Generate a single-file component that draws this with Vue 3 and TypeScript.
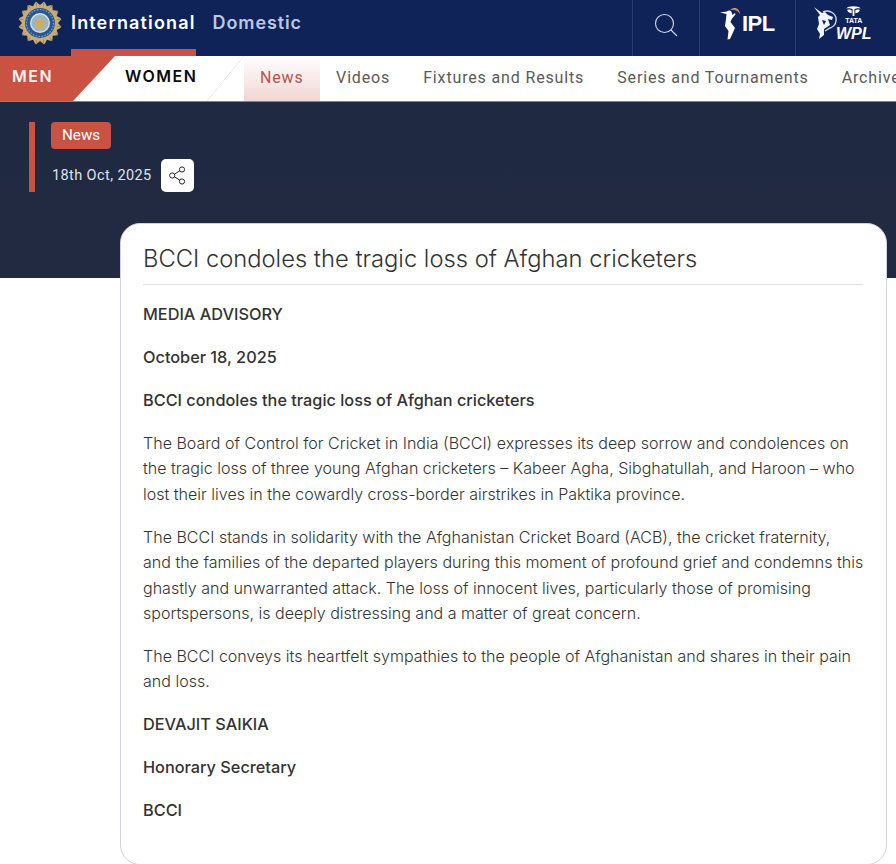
<script setup lang="ts">
const tabs = ['Videos', 'Fixtures and Results', 'Series and Tournaments', 'Archive']
const paragraphs = [
  { bold: true, text: 'MEDIA ADVISORY' },
  { bold: true, text: 'October 18, 2025' },
  { bold: true, text: 'BCCI condoles the tragic loss of Afghan cricketers' },
  { bold: false, text: 'The Board of Control for Cricket in India (BCCI) expresses its deep sorrow and condolences on the tragic loss of three young Afghan cricketers – Kabeer Agha, Sibghatullah, and Haroon – who lost their lives in the cowardly cross-border airstrikes in Paktika province.' },
  { bold: false, text: 'The BCCI stands in solidarity with the Afghanistan Cricket Board (ACB), the cricket fraternity,\nand the families of the departed players during this moment of profound grief and condemns this ghastly and unwarranted attack. The loss of innocent lives, particularly those of promising sportspersons, is deeply distressing and a matter of great concern.' },
  { bold: false, text: 'The BCCI conveys its heartfelt sympathies to the people of Afghanistan and shares in their pain and loss.' },
  { bold: true, text: 'DEVAJIT SAIKIA' },
  { bold: true, text: 'Honorary Secretary' },
  { bold: true, text: 'BCCI' },
]
const rays = Array.from({ length: 16 }, (_, i) => i * 22.5)
</script>

<template>
  <div class="page">
    <header class="top">
      <svg class="crest" viewBox="0 0 44 44" aria-hidden="true">
        <g fill="#c9ad72">
          <path v-for="r in rays" :key="r" d="M18 0.5 L22 4 L26 0.5 L25 9 L19 9 Z" :transform="`rotate(${r} 22 22)`" />
        </g>
        <circle cx="22" cy="22" r="15" fill="#2f5590" />
        <circle cx="22" cy="22" r="13.5" fill="none" stroke="#7fa2c8" stroke-width="1.2" stroke-dasharray="1.5 1.5" />
        <circle cx="22" cy="22" r="10" fill="#d8e2dc" />
        <circle cx="22" cy="22" r="8.6" fill="#8db8d8" />
        <path d="M22 14.5 L24.2 19.6 L29.6 20 L25.5 23.6 L26.8 29 L22 26.2 L17.2 29 L18.5 23.6 L14.4 20 L19.8 19.6 Z" fill="#d9a95a" />
      </svg>
      <nav class="primary">
        <a class="primary-link active">International</a>
        <a class="primary-link muted">Domestic</a>
      </nav>
      <div class="top-actions">
        <div class="action search">
          <svg width="24" height="24" viewBox="0 0 24 24" fill="none" stroke="#d6dcec" stroke-width="1.1" aria-hidden="true">
            <circle cx="10.5" cy="10.5" r="9" />
            <path d="M17 17 L23 23" />
          </svg>
        </div>
        <div class="action ipl">
          <svg width="22" height="33" viewBox="0 0 22 33" aria-hidden="true">
            <path d="M10 3 C14 -1 20 1 20 8 C20 5 16 2 10 3 Z" fill="#e6b23c" />
            <path d="M13 2.2 C16 1 19 3 20 7 C18 4 16 3 13 2.2 Z" fill="#c8679a" />
            <path d="M0 5.5 L7 4.5 C8 3 11 3 11.5 5 L12.5 8 L15 6 L15.5 7.5 L12 11.5 L10.5 15 L15 21 L10 32 L7.5 32.5 L8.5 24 L5 19 L6 12 L6.5 7 Z" fill="#fff" />
          </svg>
          <span class="ipl-text">IPL</span>
        </div>
        <div class="action wpl">
          <svg class="wpl-figure" width="23" height="32" viewBox="0 0 23 32" aria-hidden="true">
            <path d="M9 5 C16 2 23 7 22 14 C21.5 18 19 20 16 21 L11 24" fill="none" stroke="#cfd7ea" stroke-width="1.4" />
            <path d="M0 0 L8 6 L11 5 L14 8 L19 10 L18 13 L14 12 L16 18 L10 22 L10 28 L5 32 L6 27 L3 22 L5 17 L4 10 L6 8 Z" fill="#f1f4fa" />
            <path d="M8 13 L12 14 L10 18 Z" fill="#0f2359" />
          </svg>
          <div class="wpl-text">
            <svg class="tata-mark" width="15" height="10" viewBox="0 0 16 11" aria-hidden="true">
              <path d="M0 3 C2 -0.5 14 -0.5 16 3 C13 2 11 3 9 3.5 L9 11 L7 11 L7 3.5 C5 3 3 2 0 3 Z M1 4.5 C3 3.5 5 4 6 5 L6 8 C4 8 2 7 1 4.5 Z M15 4.5 C13 3.5 11 4 10 5 L10 8 C12 8 14 7 15 4.5 Z" fill="#fff" />
            </svg>
            <span class="tata">TATA</span>
            <span class="wpl-name">WPL</span>
          </div>
        </div>
      </div>
    </header>

    <div class="subnav">
      <div class="gender">
        <span class="men">MEN</span>
        <span class="women">WOMEN</span>
      </div>
      <div class="tabs">
        <a class="tab current">News</a>
        <a v-for="t in tabs" :key="t" class="tab">{{ t }}</a>
      </div>
    </div>

    <section class="hero">
      <div class="meta">
        <span class="badge">News</span>
        <div class="date-row">
          <span class="date">18th Oct, 2025</span>
          <button class="share" type="button" aria-label="Share">
            <svg width="17" height="19" viewBox="0 0 17 19" fill="none" stroke="#222" stroke-width="1" aria-hidden="true">
              <circle cx="13" cy="3.5" r="2.6" fill="#fff" />
              <circle cx="3.2" cy="9.5" r="2.6" fill="#fff" />
              <circle cx="13" cy="15.5" r="2.6" fill="#fff" />
              <path d="M5.5 8.2 L10.8 4.8 M5.5 10.8 L10.8 14.2" />
            </svg>
          </button>
        </div>
      </div>
    </section>

    <div class="article-wrap">
      <article class="card">
        <h1 class="title">BCCI condoles the tragic loss of Afghan cricketers</h1>
        <p v-for="(p, i) in paragraphs" :key="i" :class="['para', { strong: p.bold }]">{{ p.text }}</p>
      </article>
    </div>
  </div>
</template>

<style>
html, body { margin: 0; background: #fff; overflow: hidden; }
</style>

<style scoped>
.page {
  width: 896px;
  height: 864px;
  overflow: hidden;
  font-family: Roboto, "Liberation Sans", sans-serif;
  color: #333;
}
.top {
  height: 56px;
  background: #0f2359;
  display: flex;
  align-items: flex-start;
  padding-left: 18px;
  box-sizing: border-box;
}
.crest { width: 44px; height: 44px; margin-top: 1px; flex: none; }
.primary { display: flex; height: 56px; margin-left: 9px; gap: 17px; }
.primary-link {
  font-family: Inter, sans-serif;
  font-size: 18px;
  font-weight: 600;
  letter-spacing: 1.15px;
  line-height: 46px;
  height: 56px;
  box-sizing: border-box;
  color: #fff;
}
.primary-link.active { border-bottom: 7px solid #c95243; }
.primary-link.muted { color: #bcc7e4; letter-spacing: 0.9px; }
.top-actions { margin-left: auto; display: flex; height: 56px; }
.action {
  height: 56px;
  box-sizing: border-box;
  border-left: 1px solid #2a3c70;
  display: flex;
  align-items: center;
}
.search { width: 67px; padding-bottom: 6px; justify-content: center; }
.ipl { width: 96px; padding: 0 0 9px 20px; gap: 0; }
.ipl-text {
  font-family: "Liberation Sans", sans-serif;
  font-weight: 700;
  font-size: 22px;
  letter-spacing: -0.5px;
  color: #fff;
}
.wpl { width: 101px; padding: 0 0 7px 18px; gap: 0; }
.wpl-figure { margin-bottom: 3px; }
.wpl-text { display: flex; flex-direction: column; align-items: center; margin-left: -1px; }
.tata-mark { display: block; }
.tata {
  font-family: "Liberation Sans", sans-serif;
  font-weight: 700;
  font-size: 7px;
  line-height: 8px;
  color: #fff;
  margin-top: 1px;
}
.wpl-name {
  font-family: "Liberation Sans", sans-serif;
  font-style: italic;
  font-weight: 700;
  font-size: 16px;
  line-height: 18.4px;
  color: #fff;
}
.subnav {
  height: 46px;
  background: #fff;
  display: flex;
  box-sizing: border-box;
  border-bottom: 1px solid #7d8590;
  white-space: nowrap;
}
.gender { position: relative; width: 244px; flex: none; }
.men, .women {
  font-family: Inter, sans-serif;
  font-size: 16px;
  font-weight: 600;
  letter-spacing: 1.5px;
  position: absolute;
  top: 10px;
  line-height: 20px;
}
.gender {
  background:
    linear-gradient(to bottom right, transparent calc(50% - 0.5px), #dfe2e6 50%, transparent calc(50% + 0.5px)) 207px 0 / 37px 100% no-repeat,
    linear-gradient(to bottom right, #c95243 calc(50% - 0.5px), #fff calc(50% + 0.5px)) 73px 0 / 42px 100% no-repeat,
    linear-gradient(#c95243, #c95243) 0 0 / 73px 100% no-repeat;
}
.men { left: 12px; color: #fdf2f0; }
.women { left: 125px; color: #0a0a0a; }
.tabs { display: flex; flex: none; }
.tab {
  font-size: 16px;
  letter-spacing: 0.85px;
  line-height: 44px;
  color: #5a5a5a;
  padding: 0 16.5px;
}
.tab.current {
  color: #b9524a;
  padding: 0 16px;
  background: linear-gradient(#fff 0%, #f0d6d4 100%);
}
.hero {
  height: 176px;
  background: linear-gradient(#1e2942 0%, #222a40 100%);
  box-sizing: border-box;
  padding: 20px 0 0 29px;
}
.meta {
  border-left: 6px solid #c95243;
  height: 70px;
  padding-left: 16px;
  display: flex;
  flex-direction: column;
  align-items: flex-start;
}
.badge {
  background: #c95243;
  color: #fff;
  font-size: 15.2px;
  line-height: 27px;
  border-radius: 4px;
  padding: 0 11px;
}
.date-row { display: flex; align-items: center; margin-top: 10px; gap: 9px; margin-left: 1px; }
.date { color: #dfe3ea; font-size: 14.5px; letter-spacing: 0.4px; }
.share {
  width: 33px;
  height: 33px;
  padding: 0;
  border: 0;
  border-radius: 5px;
  background: #fff;
  display: flex;
  align-items: center;
  justify-content: center;
}
.article-wrap {
  margin-top: -55px;
  padding-left: 120px;
  position: relative;
}
.card {
  width: 767px;
  box-sizing: border-box;
  background: #fff;
  border: 1px solid #d0d3d8;
  border-radius: 20px;
  padding: 17px 23px 26px 22px;
  height: 642px;
}
.title {
  margin: 0 0 17px;
  font-family: Inter, sans-serif;
  font-size: 23.75px;
  font-weight: 300;
  line-height: 35px;
  color: #333;
  padding-bottom: 8px;
  border-bottom: 1px solid #dcdfe4;
}
.para {
  margin: 0 -3px 17.6px 0;
  font-family: Inter, sans-serif;
  font-size: 16.05px;
  font-weight: 300;
  line-height: 25.4px;
  color: #333;
  white-space: pre-line;
}
.para.strong { font-size: 16.3px; font-weight: 500; color: #333; }
</style>
